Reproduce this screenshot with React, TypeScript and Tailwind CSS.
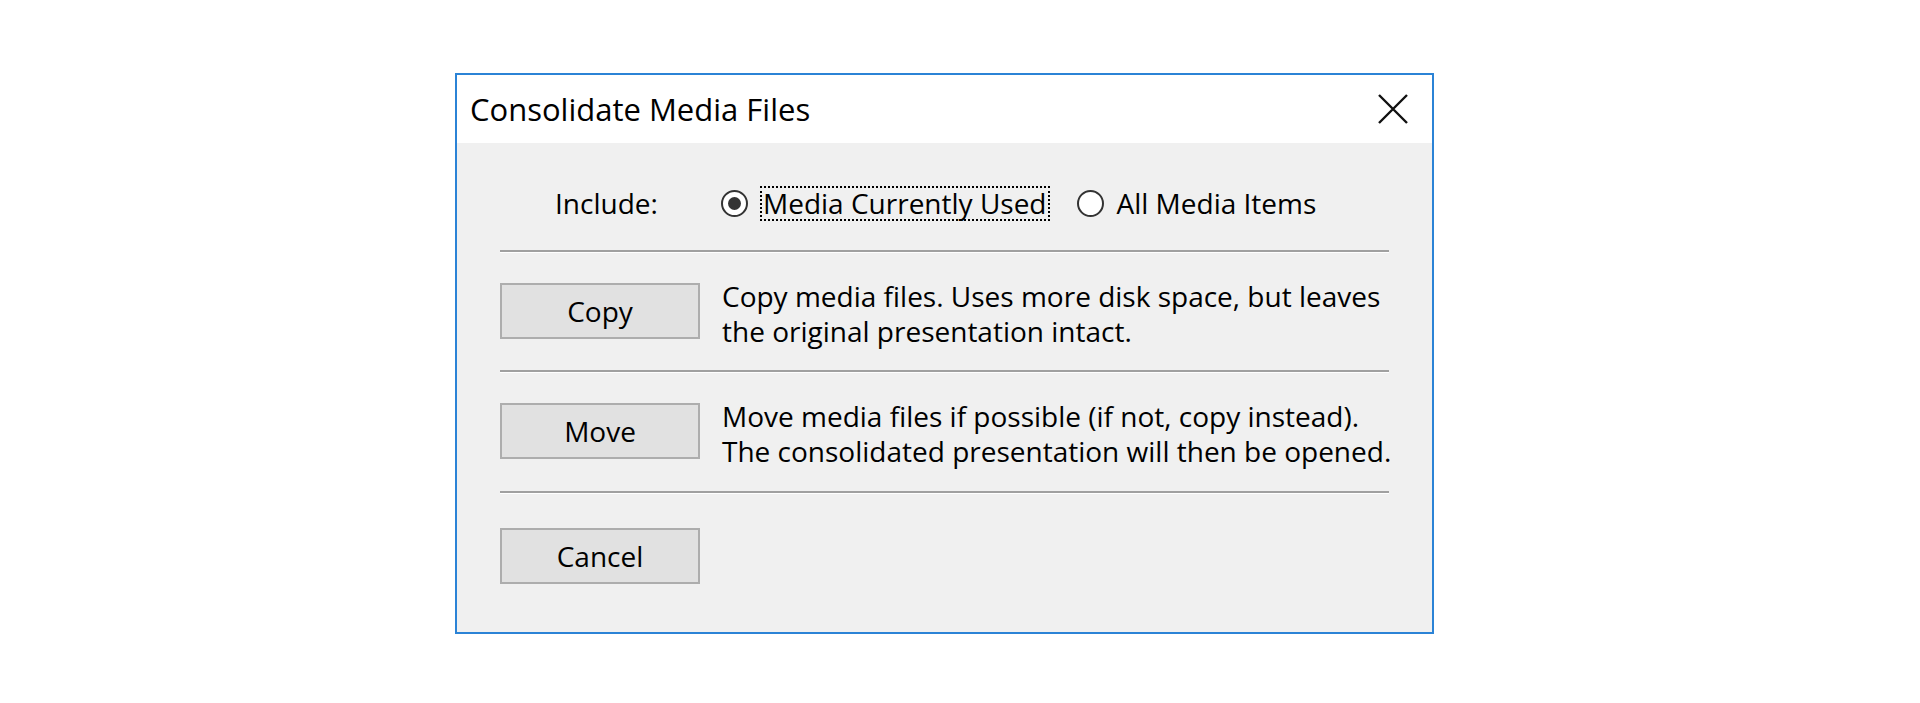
import type { ReactNode } from 'react';

const uiFont = { fontFamily: '"Open Sans", "Noto Sans", sans-serif' };

function Separator({ className = '' }: { className?: string }) {
  return <div className={`h-[3px] border-t-2 border-[#a0a0a0] border-b border-b-white ${className}`} />;
}

function DialogButton({ children }: { children: ReactNode }) {
  return (
    <button
      type="button"
      className="w-[200px] h-[56px] shrink-0 bg-[#e1e1e1] border-2 border-[#adadad] text-[28px] text-black flex items-center justify-center"
    >
      {children}
    </button>
  );
}

function Radio({ checked }: { checked?: boolean }) {
  return (
    <span className="w-[27px] h-[27px] rounded-full border-2 border-[#333] bg-white flex items-center justify-center shrink-0">
      {checked && <span className="w-[13px] h-[13px] rounded-full bg-[#333]" />}
    </span>
  );
}

function Description({ lines }: { lines: [string, string] }) {
  return (
    <div className="ml-[22px] pt-[5px] flex flex-col whitespace-nowrap">
      <span className="leading-[35px]">{lines[0]}</span>
      <span className="leading-[35px]">{lines[1]}</span>
    </div>
  );
}

export default function App() {
  return (
    <div className="min-h-screen bg-white pt-[73px] pl-[455px]" style={uiFont}>
      <div className="w-[979px] h-[561px] border-2 border-[#2b83d6] bg-[#f0f0f0] flex flex-col">
        {/* Title bar */}
        <div className="h-[68px] bg-white flex items-center justify-between pl-[13px] pr-[24px]">
          <span className="text-[31px] text-black">Consolidate Media Files</span>
          <svg width="30" height="30" viewBox="0 0 30 30" className="shrink-0">
            <path d="M1 1 L29 29 M29 1 L1 29" stroke="#111" strokeWidth="2.4" fill="none" />
          </svg>
        </div>

        {/* Body */}
        <div className="flex-1 px-[43px] text-[28px] text-black">
          <div className="mt-[40px] h-[40px] flex items-center pl-[55px]">
            <span className="w-[166px] shrink-0">Include:</span>
            <label className="flex items-center">
              <Radio checked />
              <span className="ml-[12px] px-[1px] border-2 border-dotted border-black leading-[31px]">Media Currently Used</span>
            </label>
            <label className="flex items-center ml-[27px]">
              <Radio />
              <span className="ml-[13px]">All Media Items</span>
            </label>
          </div>

          <Separator className="mt-[27px]" />

          <div className="mt-[30px] h-[56px] flex items-center">
            <DialogButton>Copy</DialogButton>
            <Description lines={['Copy media files. Uses more disk space, but leaves', 'the original presentation intact.']} />
          </div>

          <Separator className="mt-[31px]" />

          <div className="mt-[30px] h-[56px] flex items-center">
            <DialogButton>Move</DialogButton>
            <Description lines={['Move media files if possible (if not, copy instead).', 'The consolidated presentation will then be opened.']} />
          </div>

          <Separator className="mt-[32px]" />

          <div className="mt-[34px]">
            <DialogButton>Cancel</DialogButton>
          </div>
        </div>
      </div>
    </div>
  );
}
